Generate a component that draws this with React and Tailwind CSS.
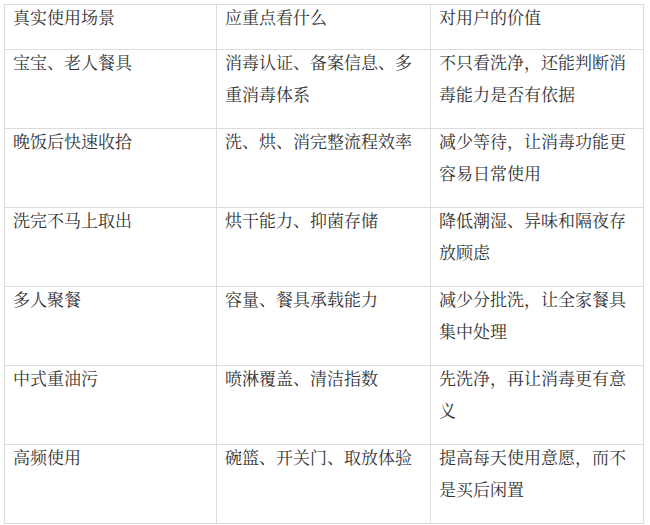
const ROWS = [
  ['宝宝、老人餐具', '消毒认证、备案信息、多重消毒体系', '不只看洗净，还能判断消毒能力是否有依据'],
  ['晚饭后快速收拾', '洗、烘、消完整流程效率', '减少等待，让消毒功能更容易日常使用'],
  ['洗完不马上取出', '烘干能力、抑菌存储', '降低潮湿、异味和隔夜存放顾虑'],
  ['多人聚餐', '容量、餐具承载能力', '减少分批洗，让全家餐具集中处理'],
  ['中式重油污', '喷淋覆盖、清洁指数', '先洗净，再让消毒更有意义'],
  ['高频使用', '碗篮、开关门、取放体验', '提高每天使用意愿，而不是买后闲置'],
];

const HEAD = ['真实使用场景', '应重点看什么', '对用户的价值'];

function Cell({ children }) {
  return (
    <td className="border border-[#dcdcdc] px-2 pt-0 align-top">
      <div className="-mt-[4px]">{children}</div>
    </td>
  );
}

export default function App() {
  return (
    <div
      className="min-h-[525px] w-[650px] bg-white pl-[4px] pt-[4px] text-[17px] leading-[32px] text-[#333333]"
      style={{ fontFamily: '"Noto Serif CJK SC", "Noto Sans CJK SC", serif' }}
    >
      <table className="w-[639px] table-fixed border-collapse">
        <colgroup>
          <col className="w-[212px]" />
          <col className="w-[214px]" />
          <col className="w-[213px]" />
        </colgroup>
        <thead>
          <tr className="h-[45px]">
            {HEAD.map(h => (
              <Cell key={h}>{h}</Cell>
            ))}
          </tr>
        </thead>
        <tbody>
          {ROWS.map(row => (
            <tr key={row[0]} className="h-[79px]">
              {row.map((c, i) => (
                <Cell key={i}>{c}</Cell>
              ))}
            </tr>
          ))}
        </tbody>
      </table>
    </div>
  );
}
